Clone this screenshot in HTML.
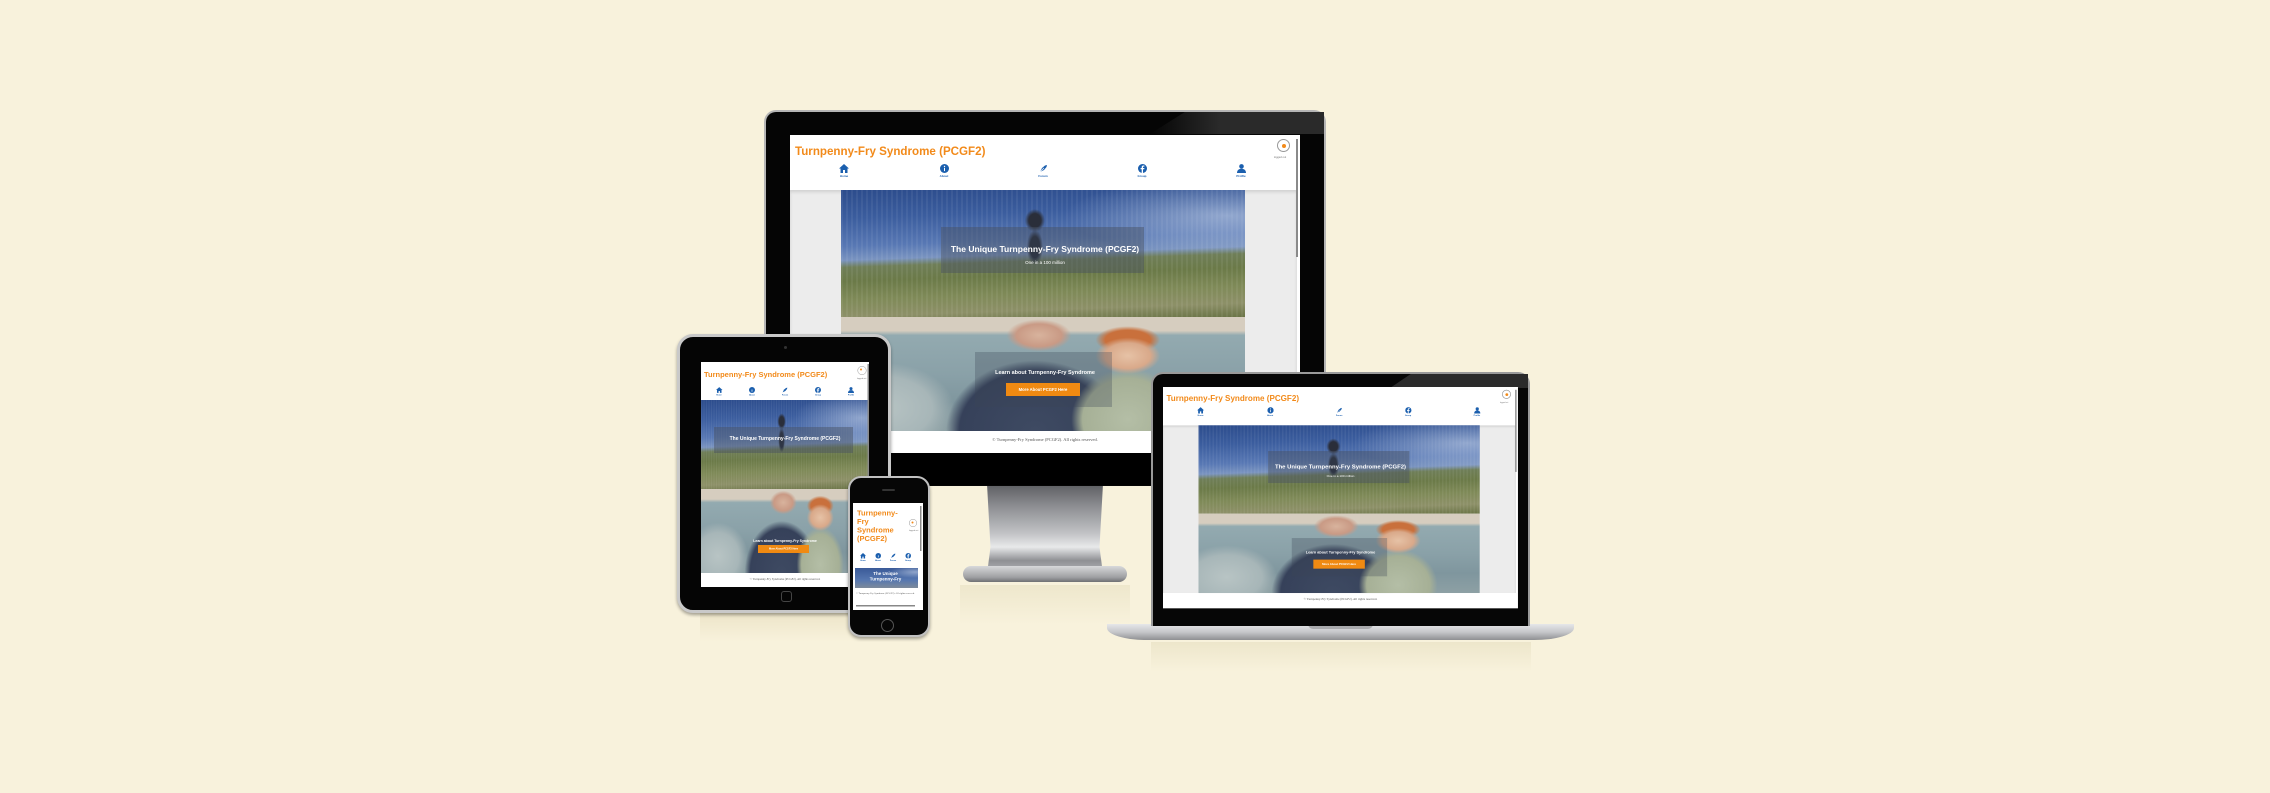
<!DOCTYPE html>
<html><head><meta charset="utf-8"><style>
*{margin:0;padding:0;box-sizing:border-box}
body{width:2270px;height:793px;background:#f8f2dc;position:relative;overflow:hidden;font-family:"Liberation Sans",sans-serif}
.abs{position:absolute}
.site{position:absolute;left:0;top:0;width:510px;height:318px;background:#fff;overflow:hidden;transform-origin:0 0}
.title{position:absolute;left:5px;top:10px;font-weight:bold;font-size:11.6px;color:#f28a1a;white-space:nowrap}
.logc{position:absolute;width:13px;height:13px;border:1px solid #999;border-radius:50%}
.logc:after{content:"";position:absolute;left:3.5px;top:3.5px;width:4px;height:4px;border-radius:50%;background:#f28a1a}
.logt{position:absolute;font-size:2.6px;color:#777}
.nav{position:absolute;text-align:center;width:20px;margin-left:-10px}
.nav svg{display:block;margin:0 auto}
.nav span{display:block;font-size:3px;color:#1b5fae;font-weight:bold;margin-top:1px}
.cont{position:absolute;background:#ececec;box-shadow:inset 0 2px 3px rgba(0,0,0,.12)}
.h1{position:absolute;overflow:hidden;
background:
radial-gradient(ellipse 2.5% 9% at 48% 24%,#2a2e3a 0,#2a2e3a 60%,transparent 100%),
radial-gradient(ellipse 2% 14% at 48% 45%,#1d2230 0,#1d2230 60%,transparent 100%),
repeating-linear-gradient(90deg,rgba(255,255,255,.06) 0 2px,transparent 2px 5px),
linear-gradient(178deg,#2c4c8c 0%,#3b5d9e 20%,#5878b4 40%,#7a94c0 50%,#6f7e58 55%,#6b7a48 65%,#7f8a58 78%,#8d9068 90%,#6a7446 100%);}
.h1:before{content:"";position:absolute;right:0;top:0;width:45%;height:50%;background:radial-gradient(ellipse at 90% 40%,rgba(220,230,245,.5),transparent 70%)}
.h2{position:absolute;overflow:hidden;
background:
radial-gradient(ellipse 8% 16% at 71% 34%,#e6c2a6 0,#d9a98a 70%,transparent 100%),
radial-gradient(ellipse 8% 12% at 71% 20%,#c9703c 0,#c9703c 70%,transparent 100%),
radial-gradient(ellipse 14% 45% at 71% 90%,#b4bea6 0,#a6b096 80%,transparent 100%),
radial-gradient(ellipse 8% 14% at 49% 16%,#d8b39d 0,#c99a85 70%,transparent 100%),
radial-gradient(ellipse 22% 62% at 48% 100%,#3e4a62 0,#36415a 85%,transparent 100%),
radial-gradient(ellipse 18% 40% at 10% 80%,#b8c4c4 0,#a7b6b8 70%,transparent 100%),
linear-gradient(180deg,#d6cdbf 0,#d6cdbf 12%,#93aab0 16%,#8aa1a8 50%,#7f969e 75%,#8da0a4 100%);}
.ov{position:absolute;background:rgba(70,80,95,.45)}
.ovt{position:absolute;left:0;right:0;text-align:center;color:#fff;font-weight:bold;white-space:nowrap}
.btn{position:absolute;background:#f08a12;color:#fff;font-weight:bold;text-align:center}
.foot{position:absolute;left:0;right:0;text-align:center;font-family:"Liberation Serif",serif;color:#555}
.sb{position:absolute;background:#8a8a8a;width:2px}
</style></head><body>

<div class="abs" style="left:700px;top:612px;width:190px;height:30px;background:linear-gradient(#ece4c8,rgba(248,242,220,0))"></div>
<div class="abs" style="left:1151px;top:642px;width:380px;height:30px;background:linear-gradient(#ede6cb,rgba(248,242,220,0))"></div>
<div class="abs" style="left:960px;top:585px;width:170px;height:40px;background:linear-gradient(#eee7cc,rgba(248,242,220,0))"></div>

<!-- MONITOR -->
<div class="abs" style="left:987px;top:484px;width:116px;height:90px;background:linear-gradient(180deg,#5d5e62 0,#8d8e92 25%,#c2c3c6 55%,#e8e9ea 70%,#8f9094 85%,#b8b9bc 100%);clip-path:polygon(0 0,100% 0,97% 70%,100% 100%,0 100%,3% 70%)"></div>
<div class="abs" style="left:963px;top:566px;width:164px;height:16px;border-radius:8px;background:linear-gradient(180deg,#d8d9db,#9fa0a3 70%,#6f7073)"></div>
<div class="abs" style="left:764px;top:110px;width:562px;height:376px;background:#050505;border-radius:12px 12px 0 0;border:2px solid #b5b5b5;border-bottom:none"></div>
<div class="abs" style="left:766px;top:453px;width:558px;height:32px;background:#000"></div>
<div class="abs" style="left:1150px;top:112px;width:174px;height:22px;background:linear-gradient(90deg,transparent,#2a2a2a 40%);clip-path:polygon(20% 0,100% 0,100% 100%,0 100%)"></div>

<div class="abs" style="left:790px;top:135px;width:510px;height:318px">
 <div class="site" id="m">
  <div class="title">Turnpenny-Fry Syndrome (PCGF2)</div>
  <div class="logc" style="left:487px;top:4px"></div>
  <div class="logt" style="left:484px;top:21px">logged out</div>
  <div class="nav" style="left:54px;top:29px"><svg width="10" height="9" viewBox="0 0 10 9"><path d="M5 0L0 4.5h1.5V9h2.5V6h2v3h2.5V4.5H10z" fill="#1b5fae"/></svg><span>Home</span></div>
  <div class="nav" style="left:154px;top:29px"><svg width="9" height="9" viewBox="0 0 9 9"><circle cx="4.5" cy="4.5" r="4.5" fill="#1b5fae"/><rect x="4" y="3.8" width="1" height="3.3" fill="#fff"/><circle cx="4.5" cy="2.4" r=".7" fill="#fff"/></svg><span>About</span></div>
  <div class="nav" style="left:253px;top:29px"><svg width="9" height="9" viewBox="0 0 9 9"><path d="M1 8L3 4 6 1.5 8 1 7.5 3 5 6z" fill="#1b5fae"/><path d="M1 8L5 4" stroke="#fff" stroke-width=".6"/></svg><span>Forum</span></div>
  <div class="nav" style="left:352px;top:29px"><svg width="9" height="9" viewBox="0 0 9 9"><circle cx="4.5" cy="4.5" r="4.5" fill="#1b5fae"/><path d="M5 9V5.3h1.2l.2-1.3H5v-.8c0-.4.2-.6.6-.6h.8V1.5H5.3C4.2 1.5 3.7 2.1 3.7 3.1V4H2.6v1.3h1.1V9z" fill="#fff"/></svg><span>Group</span></div>
  <div class="nav" style="left:451px;top:29px"><svg width="9" height="9" viewBox="0 0 9 9"><circle cx="4.5" cy="2.4" r="2.3" fill="#1b5fae"/><path d="M0 9c0-3 2-4.3 4.5-4.3S9 6 9 9z" fill="#1b5fae"/></svg><span>Profile</span></div>
  <div class="cont" style="left:0;top:55px;width:507px;height:241px"></div>
  <div class="h1" style="left:51px;top:55px;width:404px;height:127px"></div>
  <div class="ov" style="left:151px;top:92px;width:203px;height:46px"></div>
  <div class="ovt" style="top:109px;font-size:8.5px">The Unique Turnpenny-Fry Syndrome (PCGF2)</div>
  <div class="ovt" style="top:125px;font-size:4.5px;font-weight:normal">One in a 100 million</div>
  <div class="h2" style="left:51px;top:182px;width:404px;height:114px"></div>
  <div class="ov" style="left:185px;top:217px;width:137px;height:55px;background:rgba(60,70,85,.3)"></div>
  <div class="ovt" style="top:235px;font-size:5.5px">Learn about Turnpenny-Fry Syndrome</div>
  <div class="btn" style="left:216px;top:248px;width:74px;height:13px;font-size:4.2px;line-height:13px">More About PCGF2 Here</div>
  <div class="foot" style="top:302px;font-size:4.5px">© Turnpenny-Fry Syndrome (PCGF2). All rights reserved.</div>
  <div class="sb" style="left:506px;top:4px;height:118px"></div>
 </div>
</div>

<!-- LAPTOP -->
<div class="abs" style="left:1107px;top:624px;width:467px;height:16px;border-radius:0 0 40px 40px/0 0 12px 12px;background:linear-gradient(180deg,#e6e7e9,#c6c7ca 50%,#8e8f92)"></div>
<div class="abs" style="left:1308px;top:624px;width:65px;height:5px;border-radius:0 0 5px 5px;background:#a9aaad"></div>
<div class="abs" style="left:1151px;top:372px;width:379px;height:254px;background:#060606;border-radius:12px 12px 0 0;border:2px solid #9a9a9a;border-bottom:none"></div>
<div class="abs" style="left:1390px;top:374px;width:138px;height:14px;background:#2b2b2b;clip-path:polygon(15% 0,100% 0,100% 100%,0 100%)"></div>
<div class="abs" style="left:1163px;top:387px;width:355px;height:223px;overflow:hidden">
 <div class="site" style="transform:scale(0.696)" id="l"></div>
</div>

<!-- TABLET -->
<div class="abs" style="left:677px;top:334px;width:214px;height:279px;border-radius:16px;background:#050505;border:3px solid #c9c9c9;box-shadow:0 2px 3px rgba(0,0,0,.35)"></div>
<div class="abs" style="left:781px;top:591px;width:11px;height:11px;border-radius:3px;border:1px solid #444"></div>
<div class="abs" style="left:784px;top:346px;width:3px;height:3px;border-radius:50%;background:#333"></div>
<div class="abs" style="left:701px;top:362px;width:168px;height:225px;overflow:hidden">
 <div class="site" style="width:336px;height:450px;transform:scale(0.5)">
  <div class="title" style="left:6px;top:17px;font-size:15px">Turnpenny-Fry Syndrome (PCGF2)</div>
  <div class="logc" style="left:313px;top:8px;width:18px;height:18px"></div>
  <div class="logt" style="left:312px;top:30px;font-size:4px">logged out</div>
  <div class="nav" style="left:36px;top:50px;width:30px;margin-left:-15px"><svg width="13" height="12" viewBox="0 0 10 9"><path d="M5 0L0 4.5h1.5V9h2.5V6h2v3h2.5V4.5H10z" fill="#1b5fae"/></svg><span style="font-size:4px">Home</span></div>
  <div class="nav" style="left:102px;top:50px;width:30px;margin-left:-15px"><svg width="12" height="12" viewBox="0 0 9 9"><circle cx="4.5" cy="4.5" r="4.5" fill="#1b5fae"/><rect x="4" y="3.8" width="1" height="3.3" fill="#fff"/></svg><span style="font-size:4px">About</span></div>
  <div class="nav" style="left:168px;top:50px;width:30px;margin-left:-15px"><svg width="12" height="12" viewBox="0 0 9 9"><path d="M1 8L3 4 6 1.5 8 1 7.5 3 5 6z" fill="#1b5fae"/></svg><span style="font-size:4px">Forum</span></div>
  <div class="nav" style="left:234px;top:50px;width:30px;margin-left:-15px"><svg width="12" height="12" viewBox="0 0 9 9"><circle cx="4.5" cy="4.5" r="4.5" fill="#1b5fae"/><path d="M5 9V5.3h1.2l.2-1.3H5v-.8c0-.4.2-.6.6-.6h.8V1.5H5.3C4.2 1.5 3.7 2.1 3.7 3.1V4H2.6v1.3h1.1V9z" fill="#fff"/></svg><span style="font-size:4px">Group</span></div>
  <div class="nav" style="left:300px;top:50px;width:30px;margin-left:-15px"><svg width="12" height="12" viewBox="0 0 9 9"><circle cx="4.5" cy="2.4" r="2.3" fill="#1b5fae"/><path d="M0 9c0-3 2-4.3 4.5-4.3S9 6 9 9z" fill="#1b5fae"/></svg><span style="font-size:4px">Profile</span></div>
  <div class="h1" style="left:0;top:76px;width:336px;height:178px"></div>
  <div class="ov" style="left:26px;top:130px;width:278px;height:52px"></div>
  <div class="ovt" style="top:148px;font-size:10px">The Unique Turnpenny-Fry Syndrome (PCGF2)</div>
  <div class="h2" style="left:0;top:254px;width:336px;height:168px"></div>
  <div class="ovt" style="top:355px;font-size:7px">Learn about Turnpenny-Fry Syndrome</div>
  <div class="btn" style="left:114px;width:102px;height:16px;font-size:5px;line-height:16px;top:366px">More About PCGF2 Here</div>
  <div class="foot" style="top:432px;font-size:6px">© Turnpenny-Fry Syndrome (PCGF2). All rights reserved.</div>
  <div class="sb" style="left:333px;top:4px;height:250px;width:3px"></div>
 </div>
</div>

<!-- PHONE -->
<div class="abs" style="left:848px;top:476px;width:82px;height:161px;border-radius:13px;background:#060606;border:2px solid #c0c0c0;box-shadow:0 2px 3px rgba(0,0,0,.35)"></div>
<div class="abs" style="left:881px;top:619px;width:13px;height:13px;border-radius:50%;border:1px solid #555"></div>
<div class="abs" style="left:882px;top:489px;width:13px;height:2px;border-radius:1px;background:#333"></div>
<div class="abs" style="left:853px;top:503px;width:70px;height:107px;overflow:hidden">
 <div class="site" style="width:140px;height:214px;transform:scale(0.5)">
  <div class="title" style="left:8px;top:12px;font-size:15px;line-height:17px;white-space:normal;width:100px">Turnpenny-<br>Fry<br>Syndrome<br>(PCGF2)</div>
  <div class="logc" style="left:112px;top:32px;width:16px;height:16px"></div>
  <div class="logt" style="left:112px;top:52px;font-size:4px">logged out</div>
  <div class="nav" style="left:20px;top:100px;width:24px;margin-left:-12px"><svg width="12" height="11" viewBox="0 0 10 9"><path d="M5 0L0 4.5h1.5V9h2.5V6h2v3h2.5V4.5H10z" fill="#1b5fae"/></svg><span style="font-size:4px">Home</span></div>
  <div class="nav" style="left:50px;top:100px;width:24px;margin-left:-12px"><svg width="11" height="11" viewBox="0 0 9 9"><circle cx="4.5" cy="4.5" r="4.5" fill="#1b5fae"/><rect x="4" y="3.8" width="1" height="3.3" fill="#fff"/></svg><span style="font-size:4px">About</span></div>
  <div class="nav" style="left:80px;top:100px;width:24px;margin-left:-12px"><svg width="11" height="11" viewBox="0 0 9 9"><path d="M1 8L3 4 6 1.5 8 1 7.5 3 5 6z" fill="#1b5fae"/></svg><span style="font-size:4px">Forum</span></div>
  <div class="nav" style="left:110px;top:100px;width:24px;margin-left:-12px"><svg width="11" height="11" viewBox="0 0 9 9"><circle cx="4.5" cy="4.5" r="4.5" fill="#1b5fae"/><path d="M5 9V5.3h1.2l.2-1.3H5v-.8c0-.4.2-.6.6-.6h.8V1.5H5.3C4.2 1.5 3.7 2.1 3.7 3.1V4H2.6v1.3h1.1V9z" fill="#fff"/></svg><span style="font-size:4px">Group</span></div>
  <div class="h1" style="left:4px;top:130px;width:126px;height:40px;background:linear-gradient(180deg,#3a5a98,#5677b0 60%,#7d8a9a)"></div>
  <div class="ovt" style="top:136px;font-size:9px;line-height:11px;width:130px">The Unique<br>Turnpenny-Fry</div>
  <div class="foot" style="top:178px;font-size:5px;line-height:7px;text-align:left;left:6px;right:8px">© Turnpenny-Fry Syndrome (PCGF2). All rights reserved.</div>
  <div class="sb" style="left:134px;top:6px;height:90px;width:3px"></div>
  <div class="abs" style="left:6px;top:204px;width:118px;height:3px;background:#888"></div>
 </div>
</div>

<script>
document.getElementById('l').innerHTML=document.getElementById('m').innerHTML;
</script>
</body></html>
